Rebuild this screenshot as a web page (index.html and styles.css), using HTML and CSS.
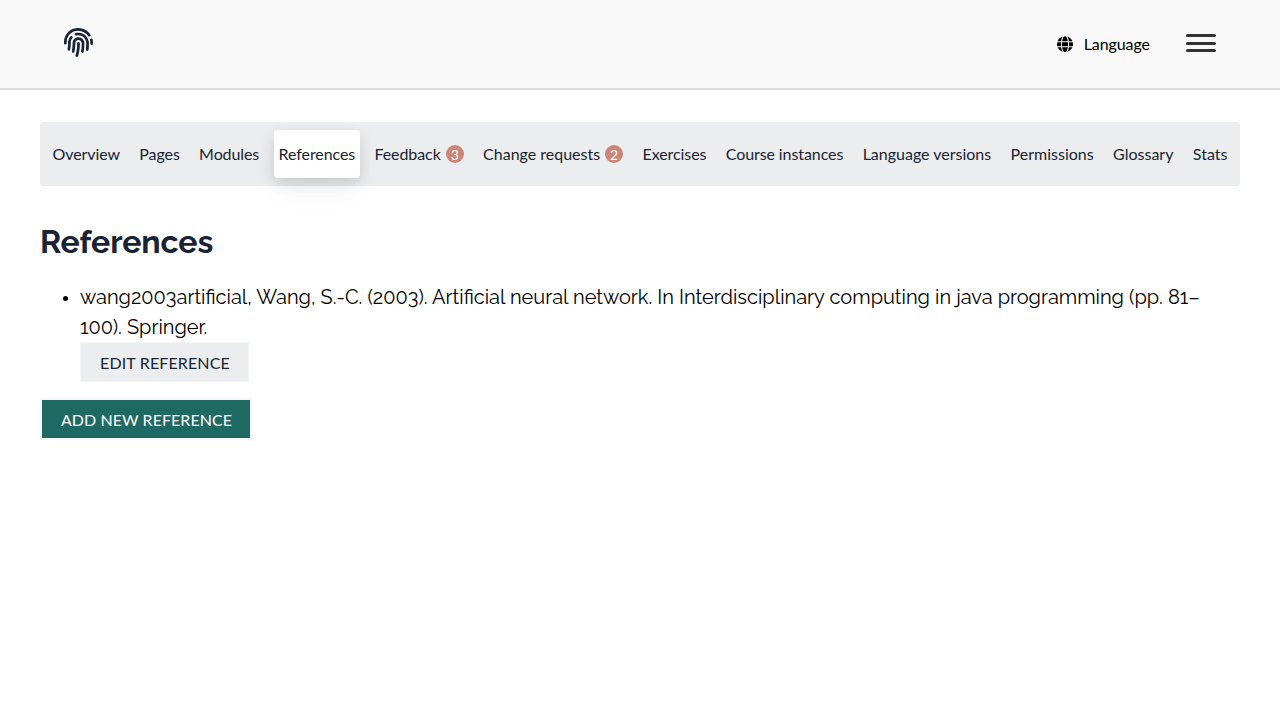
FILE: index.html
```
<!DOCTYPE html>
<html lang="en">
<head>
<meta charset="utf-8">
<title>References</title>
<link rel="stylesheet" href="styles.css">
</head>
<body>
<header class="header">
  <a class="logo" aria-label="Home"><svg class="logo-icon" viewBox="0 0 512 512"><path d="M256.12 245.96c-13.25 0-24 10.74-24 24 1.14 72.25-8.14 141.9-27.7 211.55-2.73 9.72 2.15 30.49 23.12 30.49 10.48 0 20.11-6.92 23.09-17.52 13.53-47.91 31.04-125.41 29.48-224.52.01-13.25-10.73-24-23.99-24zm-.86-81.73C194 164.16 151.25 211.3 152.1 265.32c.75 47.94-3.75 95.91-13.37 142.55-2.69 12.98 5.67 25.69 18.64 28.36 13.05 2.67 25.67-5.66 28.36-18.64 10.34-50.09 15.17-101.58 14.37-153.02-.41-25.95 19.92-52.49 54.45-52.34 31.31.47 57.15 25.34 57.62 55.47.77 48.05-2.81 96.33-10.61 143.55-2.17 13.06 6.69 25.42 19.76 27.58 19.97 3.33 26.81-15.1 27.58-19.77 8.28-50.03 12.06-101.21 11.27-152.11-.88-55.8-47.94-101.88-104.91-102.72zm-110.69-19.78c-10.3-8.34-25.37-6.8-33.76 3.48-25.62 31.5-39.39 71.28-38.75 112 .59 37.58-2.47 75.27-9.11 112.05-2.34 13.05 6.31 25.53 19.36 27.89 20.11 3.5 27.07-14.81 27.89-19.36 7.19-39.84 10.5-80.66 9.86-121.33-.47-29.88 9.2-57.88 28-80.97 8.35-10.28 6.79-25.39-3.49-33.76zm109.47-62.33c-15.41-.41-30.87 1.44-45.78 4.97-12.89 3.06-20.87 15.98-17.83 28.89 3.06 12.89 16 20.83 28.89 17.83 11.05-2.61 22.47-3.77 34-3.75 75.43 1.13 137.73 61.5 138.88 134.58.59 37.88-1.28 76.11-5.58 113.63-1.5 13.17 7.95 25.08 21.11 26.58 16.72 1.95 25.51-11.88 26.58-21.11a929.06 929.06 0 0 0 5.89-119.85c-1.56-98.75-85.07-180.33-186.16-181.77zm252.07 121.45c-2.86-12.92-15.51-21.2-28.61-18.27-12.94 2.86-21.12 15.66-18.26 28.61 4.71 21.41 4.91 37.41 4.7 61.6-.11 13.27 10.55 24.09 23.8 24.2h.2c13.17 0 23.89-10.61 24-23.8.18-22.18.4-44.11-5.83-72.34zm-40.12-90.72C417.29 43.46 337.6 1.29 252.81.02 183.02-.82 118.47 24.91 70.46 72.94 24.09 119.37-.9 181.04.14 246.65l-.12 21.47c-.39 13.25 10.03 24.31 23.28 24.69.23.02.48.02.72.02 12.92 0 23.59-10.3 23.97-23.3l.16-23.64c-.83-52.5 19.16-101.86 56.28-139 38.76-38.8 91.34-59.67 147.68-58.86 69.45 1.03 134.73 35.56 174.62 92.39 7.61 10.86 22.56 13.45 33.42 5.86 10.84-7.62 13.46-22.59 5.84-33.43z"/></svg></a>
  <div class="header-tools">
    <button class="language"><svg class="globe" viewBox="0 0 496 512"><path d="M336.5 160C322 70.7 287.8 8 248 8s-74 62.7-88.5 152h177zM152 256c0 22.2 1.2 43.5 3.3 64h185.3c2.1-20.5 3.3-41.8 3.3-64s-1.2-43.5-3.3-64H155.3c-2.1 20.5-3.3 41.8-3.3 64zm324.7-96c-28.6-67.9-86.5-120.4-158-141.6 24.4 33.8 41.2 84.7 50 141.6h108zM177.2 18.4C105.8 39.6 47.8 92.1 19.3 160h108c8.7-56.9 25.5-107.8 49.9-141.6zM487.4 192H372.7c2.1 21 3.3 42.5 3.3 64s-1.2 43-3.3 64h114.6c5.5-20.5 8.6-41.8 8.6-64s-3.1-43.5-8.5-64zM120 256c0-21.5 1.2-43 3.3-64H8.6C3.2 212.5 0 233.8 0 256s3.2 43.5 8.6 64h114.6c-2-21-3.2-42.5-3.2-64zm39.5 96c14.5 89.3 48.7 152 88.5 152s74-62.7 88.5-152h-177zm159.3 141.6c71.4-21.2 129.4-73.7 158-141.6h-108c-8.8 56.9-25.6 107.8-50 141.6zM19.3 352c28.6 67.9 86.5 120.4 158 141.6-24.4-33.8-41.2-84.7-50-141.6h-108z"/></svg><span class="language-label">Language</span></button>
    <button class="menu" aria-label="Menu"><span class="menu-bar"></span><span class="menu-bar"></span><span class="menu-bar"></span></button>
  </div>
</header>
<main class="main">
  <nav class="tabs">
    <a class="tab">Overview</a>
    <a class="tab">Pages</a>
    <a class="tab">Modules</a>
    <a class="tab tab-active">References</a>
    <a class="tab">Feedback<span class="badge">3</span></a>
    <a class="tab tab-loose">Change requests<span class="badge">2</span></a>
    <a class="tab">Exercises</a>
    <a class="tab">Course instances</a>
    <a class="tab tab-loose">Language versions</a>
    <a class="tab tab-loose">Permissions</a>
    <a class="tab tab-loose">Glossary</a>
    <a class="tab tab-loose">Stats</a>
  </nav>
  <h1 class="title">References</h1>
  <ul class="references">
    <li class="reference">wang2003artificial, Wang, S.-C. (2003). Artificial neural network. In Interdisciplinary computing in java programming (pp. 81–<wbr>100). Springer.
      <div class="reference-actions"><button class="button button-edit">Edit reference</button></div>
    </li>
  </ul>
  <button class="button button-add">Add new reference</button>
</main>
</body>
</html>
```
FILE: styles.css
```
* { box-sizing: border-box; }
body {
  margin: 0;
  background: #fff;
  color: #000;
  font-family: Raleway, Lato, sans-serif;
  font-size: 20px;
  line-height: 30px;
}
button {
  margin: 0;
  padding: 0;
  border: 0;
  background: none;
  font-family: Lato, sans-serif;
  font-size: 16px;
}
.header {
  display: flex;
  justify-content: space-between;
  align-items: flex-start;
  height: 90px;
  padding: 28px 64px 0;
  background: #f9f9f9;
  border-bottom: 2px solid #dedede;
}
.logo { display: flex; }
.logo-icon { width: 29px; height: 29px; fill: #1a2333; }
.header-tools { display: flex; gap: 36px; }
.language {
  display: flex;
  align-items: center;
  gap: 11px;
  height: 32px;
  color: #000;
  letter-spacing: -.07px;
}
.language-label { padding-bottom: 2px; }
.globe { width: 16px; height: 16.5px; }
.menu {
  display: flex;
  flex-direction: column;
  gap: 4.5px;
  width: 30px;
  padding-top: 6px;
}
.menu-bar { height: 3px; border-radius: 2px; background: #333; }
.main { padding: 32px 40px; }
.tabs {
  display: flex;
  justify-content: space-between;
  height: 64px;
  padding: 8px;
  border-radius: 4px;
  background: #ebedee;
}
.tab {
  position: relative;
  display: flex;
  align-items: center;
  padding: 0 4.5px;
  border-radius: 4px;
  background: #ebedee;
  color: #1a2333;
  font-family: Lato, sans-serif;
  font-size: 16px;
  letter-spacing: -.09px;
  white-space: nowrap;
}
.tab-loose { letter-spacing: 0; }
.tab-active {
  background: #fff;
  box-shadow: 0 15px 30px rgba(0, 0, 0, .03), 0 5px 15px rgba(0, 0, 0, .13);
}
.badge {
  display: flex;
  align-items: center;
  justify-content: center;
  width: 18px;
  height: 18px;
  margin-left: 5px;
  padding-top: 1px;
  border-radius: 50%;
  background: #cb8579;
  color: #fff;
  font-size: 14px;
}
.title {
  margin: 36px 0 20px;
  color: #1a2333;
  font-size: 32px;
  line-height: 40px;
  font-weight: 700;
  letter-spacing: -.1px;
}
.references { margin: 0 0 16px; padding-left: 40px; }
.reference { font-feature-settings: "onum" 1; }
.reference::marker { font-size: 16px; }
.reference-actions { display: flex; }
.button {
  display: flex;
  align-items: center;
  justify-content: center;
  height: 40px;
  padding-left: 1px;
  letter-spacing: .14px;
  text-transform: uppercase;
}
.button-edit {
  width: 169px;
  border: 1px solid #f3f4f6;
  background: #ebedee;
  color: #1a2333;
}
.button-add {
  width: 212px;
  height: 42px;
  border: 2px solid #f5f6f7;
  background: #1f6964;
  color: #fff;
  letter-spacing: .06px;
}
```
